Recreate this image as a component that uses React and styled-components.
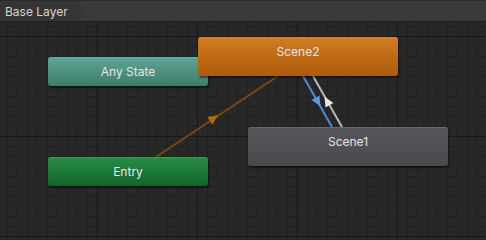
import styled, { createGlobalStyle } from "styled-components";

const GlobalStyle = createGlobalStyle`
  html, body {
    margin: 0;
    padding: 0;
    background: #282828;
  }
  body {
    font-family: Inter, "Noto Sans", sans-serif;
  }
`;

const Window = styled.div`
  width: 486px;
  height: 240px;
  display: flex;
  flex-direction: column;
  overflow: hidden;
  background: #282828;
`;

const Toolbar = styled.div`
  height: 22px;
  flex: none;
  display: flex;
  align-items: stretch;
  background: #3a3a3a;
  border-top: 1px solid #2b2b2b;
  border-bottom: 1px solid #1f1f1f;
  box-sizing: border-box;
`;

const Crumb = styled.div`
  position: relative;
  display: flex;
  align-items: center;
  padding: 0 18px 0 5px;
  font-size: 12px;
  color: #d4d4d4;
  background: #353535;
  clip-path: polygon(0 0, calc(100% - 8px) 0, 100% 50%, calc(100% - 8px) 100%, 0 100%);
`;

const Canvas = styled.div`
  position: relative;
  flex: 1;
  background-color: #282828;
  background-image:
    linear-gradient(to right, #181818 1px, transparent 1px),
    linear-gradient(to bottom, #181818 1px, transparent 1px),
    linear-gradient(to right, #212121 1px, transparent 1px),
    linear-gradient(to bottom, #212121 1px, transparent 1px);
  background-size: 100px 100px, 100px 100px, 10px 10px, 10px 10px;
  background-position: 97px 14px, 97px 14px, 7px 4px, 7px 4px;
`;

const Edges = styled.svg`
  position: absolute;
  left: 0;
  top: 0;
  width: 486px;
  height: 218px;
  z-index: 1;
`;

const palette = {
  any: ["#5fa694", "#3e7c6c"],
  entry: ["#288c44", "#0f6529"],
  orange: ["#d27d22", "#ad5a0b"],
  gray: ["#57575b", "#4a4a4e"],
};

const Node = styled.div`
  position: absolute;
  left: ${(p) => p.$x}px;
  top: ${(p) => p.$y}px;
  width: ${(p) => p.$w}px;
  height: ${(p) => p.$h}px;
  z-index: ${(p) => p.$z || 2};
  display: flex;
  align-items: center;
  justify-content: center;
  padding-bottom: ${(p) => (p.$h > 32 ? 10 : 0)}px;
  box-sizing: border-box;
  border-radius: 3px;
  font-size: 12px;
  color: #e6e6e6;
  background: linear-gradient(
    to bottom,
    ${(p) => palette[p.$kind][0]},
    ${(p) => palette[p.$kind][1]}
  );
  box-shadow: inset 0 1px 0 rgba(255, 255, 255, 0.12), 1px 2px 2px rgba(0, 0, 0, 0.45);
`;

const Arrow = ({ x, y, angle, color }) => (
  <polygon
    points="5,0 -5,-4.5 -5,4.5"
    fill={color}
    transform={`translate(${x} ${y}) rotate(${angle})`}
  />
);

export default function App() {
  // canvas starts 22px below page top
  const oy = 22;
  const down = (Math.atan2(51, 29) * 180) / Math.PI;
  const entryAng = (Math.atan2(-81, 122) * 180) / Math.PI;
  return (
    <Window>
      <GlobalStyle />
      <Toolbar>
        <Crumb>Base Layer</Crumb>
      </Toolbar>
      <Canvas>
        <Edges viewBox="0 0 486 218">
          <line x1="156" y1={157 - oy} x2="278" y2={76 - oy} stroke="#7a4a0d" strokeWidth="2" />
          <Arrow x={214} y={118 - oy} angle={entryAng} color="#b8690f" />
          <line x1="303" y1={76 - oy} x2="332" y2={127 - oy} stroke="#4d8ad6" strokeWidth="2" />
          <Arrow x={318} y={102 - oy} angle={down} color="#5a9ae8" />
          <line x1="313" y1={76 - oy} x2="342" y2={127 - oy} stroke="#b8b8b8" strokeWidth="2" />
          <Arrow x={327} y={101 - oy} angle={down + 180} color="#e8e8e8" />
        </Edges>
        <Node $kind="any" $x={48} $y={57 - oy} $w={160} $h={29}>
          Any State
        </Node>
        <Node $kind="entry" $x={48} $y={157 - oy} $w={160} $h={29}>
          Entry
        </Node>
        <Node $kind="orange" $x={198} $y={37 - oy} $w={200} $h={39} $z={3}>
          Scene2
        </Node>
        <Node $kind="gray" $x={248} $y={127 - oy} $w={200} $h={39}>
          Scene1
        </Node>
      </Canvas>
    </Window>
  );
}
